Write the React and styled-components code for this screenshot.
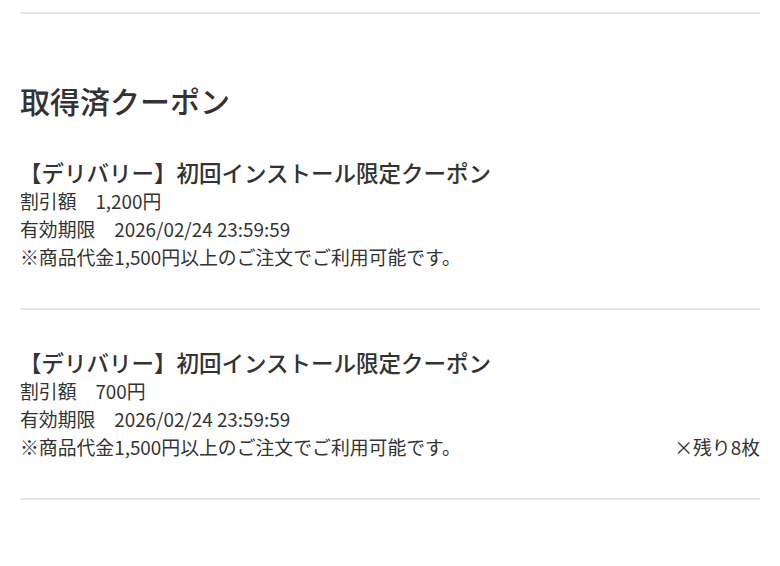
import React from "react";
import styled, { createGlobalStyle } from "styled-components";

const Global = createGlobalStyle`
  html, body { margin: 0; padding: 0; background: #ffffff; }
  body {
    font-family: "Noto Sans CJK JP", "Noto Sans", sans-serif;
    color: #333333;
  }
`;

const Page = styled.div`
  padding: 12px 20px 0;
`;

const Rule = styled.div`
  height: 2px;
  background: #e6e6e6;
`;

const Heading = styled.h2`
  margin: 66px 0 0;
  font-size: 30px;
  line-height: 40px;
  font-weight: 500;
  color: #333333;
`;

const CouponList = styled.div`
  display: flex;
  flex-direction: column;
`;

const Coupon = styled.section`
  padding: 37px 0;
  border-bottom: 2px solid #e6e6e6;
`;

const Title = styled.h3`
  margin: 0 0 0 -1px;
  font-size: 22.5px;
  line-height: 30px;
  font-weight: 500;
`;

const Line = styled.div`
  display: flex;
  justify-content: space-between;
  font-size: 18.85px;
  line-height: 28px;
`;

const Label = styled.span`
  margin-right: 1em;
`;

const Remaining = styled.span`
  text-align: right;
`;

const coupons = [
  { amount: "1,200円", remaining: null },
  { amount: "700円", remaining: "×残り8枚" },
];

export default function App() {
  return (
    <>
      <Global />
      <Page>
        <Rule />
        <Heading>取得済クーポン</Heading>
        <CouponList>
          {coupons.map((c, i) => (
            <Coupon key={i}>
              <Title>【デリバリー】初回インストール限定クーポン</Title>
              <Line>
                <span>
                  <Label>割引額</Label>
                  {c.amount}
                </span>
              </Line>
              <Line>
                <span>
                  <Label>有効期限</Label>
                  2026/02/24 23:59:59
                </span>
              </Line>
              <Line>
                <span>※商品代金1,500円以上のご注文でご利用可能です。</span>
                {c.remaining && <Remaining>{c.remaining}</Remaining>}
              </Line>
            </Coupon>
          ))}
        </CouponList>
      </Page>
    </>
  );
}
